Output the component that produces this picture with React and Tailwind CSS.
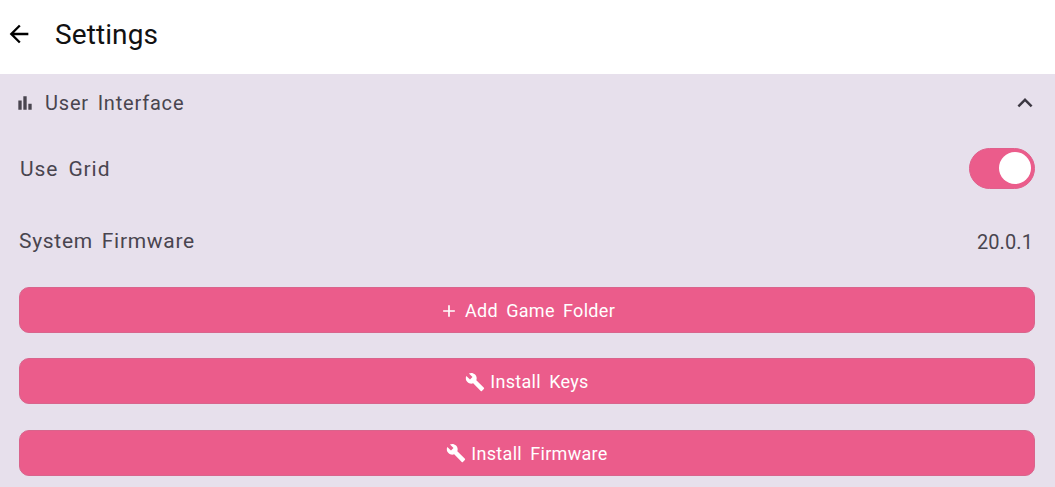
import { MdArrowBack, MdBarChart, MdExpandLess, MdBuild, MdAdd } from 'react-icons/md'

const ActionButton = ({ icon, label, iconGap }) => (
  <button
    type="button"
    className={`flex h-[46px] w-full shrink-0 items-center justify-center ${iconGap} rounded-[10px] border border-[#d9648c] bg-[#eb5c8b] pt-[1px] text-[18px] tracking-[0.3px] [word-spacing:3.5px] text-white`}
  >
    {icon}
    {label}
  </button>
)

const App = () => {
  return (
    <div className="flex h-[487px] w-[1055px] flex-col overflow-hidden bg-white font-['Roboto',sans-serif]">
      <header className="flex h-[74px] shrink-0 items-center pb-[4px] pl-[5px]">
        <MdArrowBack size={28} className="mb-[3px] text-black" />
        <h1 className="ml-[22px] text-[28px] tracking-[0.1px] text-[#111111]">Settings</h1>
      </header>

      <div className="flex flex-1 flex-col bg-[#e7e0ec] pl-[19px] pr-[20px] text-[#49454f]">
        <div className="flex h-[58px] shrink-0 items-center justify-between">
          <div className="flex items-center">
            <MdBarChart size={20} className="-ml-[4px] text-[#49454f]" />
            <span className="ml-[10px] text-[20px] tracking-[0.8px] [word-spacing:3px]">User Interface</span>
          </div>
          <MdExpandLess size={30} className="-mr-[5px] text-[#3c3842]" />
        </div>

        <div className="flex h-[74px] shrink-0 items-center justify-between">
          <span className="pl-[1px] pt-[2px] text-[21px] tracking-[0.9px] [word-spacing:4px]">Use Grid</span>
          <div className="mb-[2px] flex h-[41px] w-[66px] items-center justify-end rounded-full border border-[#e0608c] bg-[#eb5c8b] pr-[3px]">
            <div className="h-[32px] w-[32px] rounded-full bg-white" />
          </div>
        </div>

        <div className="flex h-[70px] shrink-0 items-center justify-between">
          <span className="pt-[2px] text-[21px] tracking-[0.7px] [word-spacing:3px]">System Firmware</span>
          <span className="mr-[2px] pt-[1px] text-[20px] tracking-[0.1px]">20.0.1</span>
        </div>

        <div className="mt-[11px] flex flex-col gap-[25.4px]">
          <ActionButton icon={<MdAdd size={20} />} label="Add Game Folder" iconGap="gap-[6px]" />
          <ActionButton icon={<MdBuild size={20} />} label="Install Keys" iconGap="gap-[5px]" />
          <ActionButton icon={<MdBuild size={20} />} label="Install Firmware" iconGap="gap-[5px]" />
        </div>
      </div>
    </div>
  )
}

export default App
